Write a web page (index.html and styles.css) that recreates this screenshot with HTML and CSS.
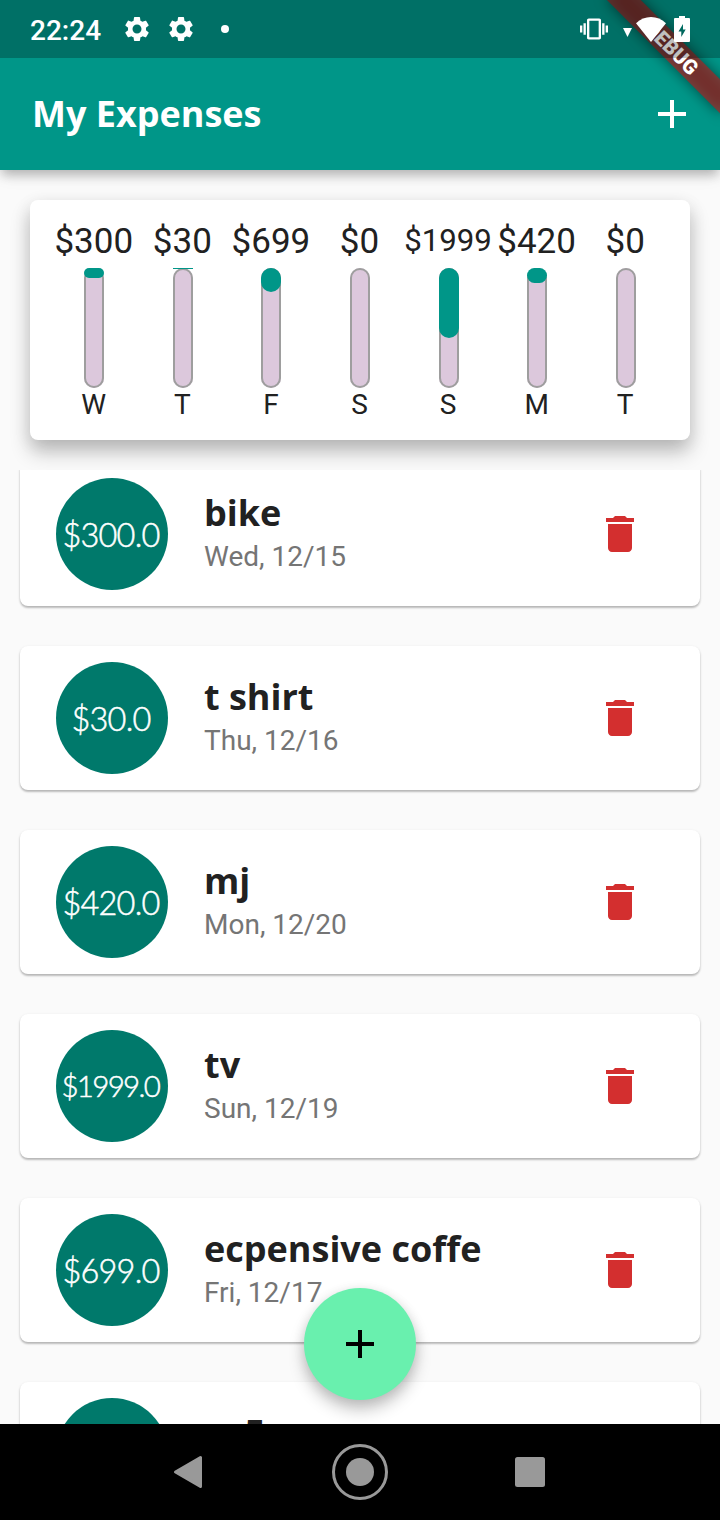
FILE: index.html
```html
<!DOCTYPE html>
<html lang="en">
<head>
<meta charset="utf-8">
<title>My Expenses</title>
<link rel="stylesheet" href="styles.css">
</head>
<body>
<svg class="defs" aria-hidden="true">
  <symbol id="gear" viewBox="0 0 24 24"><path d="M19.14 12.94c.04-.3.06-.61.06-.94 0-.32-.02-.64-.07-.94l2.03-1.58c.18-.14.23-.41.12-.61l-1.92-3.32c-.12-.22-.37-.29-.59-.22l-2.39.96c-.5-.38-1.03-.7-1.62-.94l-.36-2.54c-.04-.24-.24-.41-.48-.41h-3.84c-.24 0-.43.17-.47.41l-.36 2.54c-.59.24-1.13.57-1.62.94l-2.39-.96c-.22-.08-.47 0-.59.22L2.74 8.87c-.12.21-.08.47.12.61l2.03 1.58c-.05.3-.09.63-.09.94s.02.64.07.94l-2.03 1.58c-.18.14-.23.41-.12.61l1.92 3.32c.12.22.37.29.59.22l2.39-.96c.5.38 1.03.7 1.62.94l.36 2.54c.05.24.24.41.48.41h3.84c.24 0 .44-.17.47-.41l.36-2.54c.59-.24 1.13-.56 1.62-.94l2.39.96c.22.08.47 0 .59-.22l1.92-3.32c.12-.22.07-.47-.12-.61l-2.01-1.58zM12 15.6c-1.98 0-3.6-1.62-3.6-3.6s1.62-3.6 3.6-3.6 3.6 1.62 3.6 3.6-1.62 3.6-3.6 3.6z"/></symbol>
  <symbol id="plus" viewBox="0 0 24 24"><path d="M19 13h-6v6h-2v-6H5v-2h6V5h2v6h6v2z"/></symbol>
  <symbol id="trash" viewBox="0 0 24 24"><path d="M6 19c0 1.1.9 2 2 2h8c1.1 0 2-.9 2-2V7H6v12zM19 4h-3.5l-1-1h-5l-1 1H5v2h14V4z"/></symbol>
</svg>
<div class="screen">
  <header class="header">
    <svg class="banner" viewBox="0 0 130 130" aria-hidden="true">
      <defs><filter id="soft" x="-20%" y="-150%" width="140%" height="400%"><feGaussianBlur stdDeviation="7"/></filter></defs>
      <g transform="translate(130 0) rotate(45)">
        <rect x="-80" y="56" width="160" height="24" fill="#000" fill-opacity=".5" filter="url(#soft)"/>
        <rect x="-80" y="56" width="160" height="24" fill="#b71c1c" fill-opacity=".627"/>
        <text class="banner-text" x="0" y="75.2" text-anchor="middle">DEBUG</text>
      </g>
    </svg>
    <div class="status">
      <span class="time">22:24</span>
      <svg class="gear"><use href="#gear"/></svg>
      <svg class="gear"><use href="#gear"/></svg>
      <span class="dot"></span>
      <svg class="vibrate" viewBox="0 0 24 24"><path d="M0 15h2V9H0v6zm3 2h2V7H3v10zm19-8v6h2V9h-2zm-3 8h2V7h-2v10zM16.5 3h-9C6.67 3 6 3.67 6 4.500v15c0 .83.67 1.500 1.500 1.500h9c.83 0 1.500-.67 1.500-1.500v-15c0-.83-.67-1.500-1.500-1.500zM16 19H8V5h8v14z"/></svg>
      <svg class="signal" viewBox="0 0 9 9"><path d="M0 0h9L4.500 9z"/></svg>
      <svg class="wifi" viewBox="0 0 30 25"><path d="M0 6.300C4.300 2.200 9.500 0 15 0s10.700 2.200 15 6.300L15 25z"/></svg>
      <svg class="battery" viewBox="0 0 16 26"><path fill-rule="evenodd" d="M5 0h6v2h4q1 0 1 1V25q0 1-1 1H1q-1 0-1-1V3q0-1 1-1h4zM9 8 4.500 15.500H7.300V21l4.400-7.500H9z"/></svg>
    </div>
    <div class="bar">
      <h1 class="bar-title">My Expenses</h1>
      <svg class="icon"><use href="#plus"/></svg>
    </div>
  </header>

  <section class="chart">
    <div class="day"><span class="sum">$300</span><div class="track"><div class="fill" style="height:10.4px"></div></div><span class="label">W</span></div>
    <div class="day"><span class="sum">$30</span><div class="track"><div class="fill thin" style="height:1px"></div></div><span class="label">T</span></div>
    <div class="day"><span class="sum">$699</span><div class="track"><div class="fill" style="height:24.3px"></div></div><span class="label">F</span></div>
    <div class="day"><span class="sum">$0</span><div class="track"></div><span class="label">S</span></div>
    <div class="day"><span class="sum long">$1999</span><div class="track"><div class="fill" style="height:69.6px"></div></div><span class="label">S</span></div>
    <div class="day"><span class="sum">$420</span><div class="track"><div class="fill" style="height:14.6px"></div></div><span class="label">M</span></div>
    <div class="day"><span class="sum">$0</span><div class="track"></div><span class="label">T</span></div>
  </section>

  <main class="list">
    <article class="card"><div class="amount">$300.0</div><div class="info"><h2 class="name">bike</h2><p class="date">Wed, 12/15</p></div><svg class="icon trash"><use href="#trash"/></svg></article>
    <article class="card"><div class="amount">$30.0</div><div class="info"><h2 class="name">t shirt</h2><p class="date">Thu, 12/16</p></div><svg class="icon trash"><use href="#trash"/></svg></article>
    <article class="card"><div class="amount">$420.0</div><div class="info"><h2 class="name">mj</h2><p class="date">Mon, 12/20</p></div><svg class="icon trash"><use href="#trash"/></svg></article>
    <article class="card"><div class="amount long">$1999.0</div><div class="info"><h2 class="name">tv</h2><p class="date">Sun, 12/19</p></div><svg class="icon trash"><use href="#trash"/></svg></article>
    <article class="card"><div class="amount">$699.0</div><div class="info"><h2 class="name">ecpensive coffe</h2><p class="date">Fri, 12/17</p></div><svg class="icon trash"><use href="#trash"/></svg></article>
    <article class="card"><div class="amount"></div><div class="info"><h2 class="name">ps5</h2><p class="date">&nbsp;</p></div></article>
  </main>

  <button class="fab" aria-label="Add expense"><svg class="icon"><use href="#plus"/></svg></button>

  <nav class="nav">
    <svg class="nav-icon" viewBox="0 0 60 60"><path d="M15.500 30 40.500 15.500V44.500z" fill="#999" stroke="#999" stroke-width="3" stroke-linejoin="round"/></svg>
    <svg class="nav-icon" viewBox="0 0 60 60"><circle cx="30" cy="30" r="26.500" fill="none" stroke="#999" stroke-width="3"/><circle cx="30" cy="30" r="14" fill="#999"/></svg>
    <svg class="nav-icon" viewBox="0 0 60 60"><rect x="15" y="15" width="30" height="30" rx="2.500" fill="#999"/></svg>
  </nav>
</div>
</body>
</html>
```
FILE: styles.css
```css
* { box-sizing: border-box; }

body {
  margin: 0;
  font-family: Roboto, sans-serif;
  color: #212121;
}

h1, h2, p { margin: 0; }

.defs { display: none; }

.screen {
  position: relative;
  display: flex;
  flex-direction: column;
  width: 720px;
  height: 1520px;
  overflow: hidden;
  background: #fafafa;
}

.icon {
  width: 48px;
  height: 48px;
  fill: currentColor;
}

/* Header */
.header {
  position: relative;
  flex: none;
  height: 170px;
  background: #009688;
  color: #fff;
  box-shadow: 0 7px 10px -2px rgba(0, 0, 0, .24), 0 4px 18px rgba(0, 0, 0, .08);
}

.banner {
  position: absolute;
  top: 0;
  right: 0;
  width: 130px;
  height: 130px;
}

.banner-text {
  font: 900 20.4px Roboto, sans-serif;
  fill: #fff;
}

.status {
  position: relative;
  display: flex;
  align-items: center;
  height: 58px;
  padding: 0 30px;
  background: rgba(0, 0, 0, .25);
  fill: #fff;
}

.time {
  width: 92px;
  font-size: 28px;
  font-weight: 500;
  line-height: 34px;
  padding-top: 3px;
}

.gear { width: 30px; height: 30px; margin-right: 14px; }
.dot { width: 8px; height: 8px; margin-left: 11px; border-radius: 50%; background: #fff; }
.vibrate { width: 28px; height: 28px; margin-left: auto; }
.signal { width: 9px; height: 9px; margin: 7px 4px 0 15px; }
.wifi { width: 30px; height: 25px; margin-right: 8px; }
.battery { width: 16px; height: 26px; }

.bar {
  display: flex;
  align-items: center;
  justify-content: space-between;
  height: 112px;
  padding: 0 24px 0 32px;
}

.bar-title {
  font: 700 36px/50px "Open Sans", "Noto Sans", sans-serif;
}

/* Weekly chart */
.chart {
  flex: none;
  display: grid;
  grid-template-columns: repeat(7, 1fr);
  height: 240px;
  margin: 30px 30px 0;
  padding: 20px 20px 0;
  border-radius: 8px;
  background: #fff;
  box-shadow: 0 12px 20px rgba(0, 0, 0, .24), 0 4px 18px rgba(0, 0, 0, .08);
}

.day {
  display: flex;
  flex-direction: column;
  align-items: center;
  min-width: 0;
}

.sum {
  height: 40px;
  margin-bottom: 8px;
  padding-right: 1px;
  font-size: 35px;
  line-height: 44px;
  white-space: nowrap;
}

.sum.long { font-size: 31.2px; line-height: 42px; }

.track {
  width: 20px;
  height: 120px;
  border-radius: 10px;
  background: #dcc8dc;
  box-shadow: inset 0 0 0 2px #9e9e9e;
}

.fill {
  border-radius: 10px;
  background: #009688;
}

.fill.thin { border-radius: 0; }

.label {
  padding-right: 1px;
  font-size: 28px;
  line-height: 33px;
}

/* Expense list */
.list {
  position: relative;
  flex: 1;
  min-height: 0;
  display: flex;
  flex-direction: column;
  gap: 40px;
  margin-top: 30px;
  padding: 0 20px;
  overflow: hidden;
}

.card {
  flex: none;
  display: flex;
  align-items: center;
  height: 144px;
  padding: 0 56px 0 36px;
  border-radius: 8px;
  background: #fff;
  box-shadow: 0 2px 2px rgba(0, 0, 0, .2), 0 1px 3px rgba(0, 0, 0, .12);
}

.card:first-child { margin-top: -8px; }

.amount {
  width: 112px;
  height: 112px;
  margin-right: 36px;
  border-radius: 50%;
  background: #00796b;
  color: #fff;
  font: 300 32.5px/114px Lato, sans-serif;
  letter-spacing: -.8px;
  text-indent: -2px;
  text-align: center;
  white-space: nowrap;
  -webkit-text-stroke: .5px #fff;
}

.amount.long {
  font-size: 29.5px;
  line-height: 112px;
  letter-spacing: -1.700px;
  text-indent: -3.500px;
}

.info {
  flex: 1;
  padding-bottom: 3px;
}

.name {
  margin-bottom: 2px;
  font: 700 36px/46px "Open Sans", "Noto Sans", sans-serif;
}

.date {
  color: #757575;
  font-size: 28px;
  line-height: 38px;
}

.trash { color: #d32f2f; }

/* Floating button over the list */
.fab {
  position: absolute;
  left: 304px;
  bottom: 120px;
  display: flex;
  align-items: center;
  justify-content: center;
  width: 112px;
  height: 112px;
  padding: 0;
  border: 0;
  border-radius: 50%;
  background: #69f0ae;
  color: #000;
  box-shadow: 0 10px 16px rgba(0, 0, 0, .22), 0 2px 12px rgba(0, 0, 0, .1);
}

/* System navigation */
.nav {
  position: relative;
  flex: none;
  display: flex;
  align-items: center;
  justify-content: center;
  gap: 110px;
  height: 96px;
  background: #000;
}

.nav-icon { width: 60px; height: 60px; }
```
